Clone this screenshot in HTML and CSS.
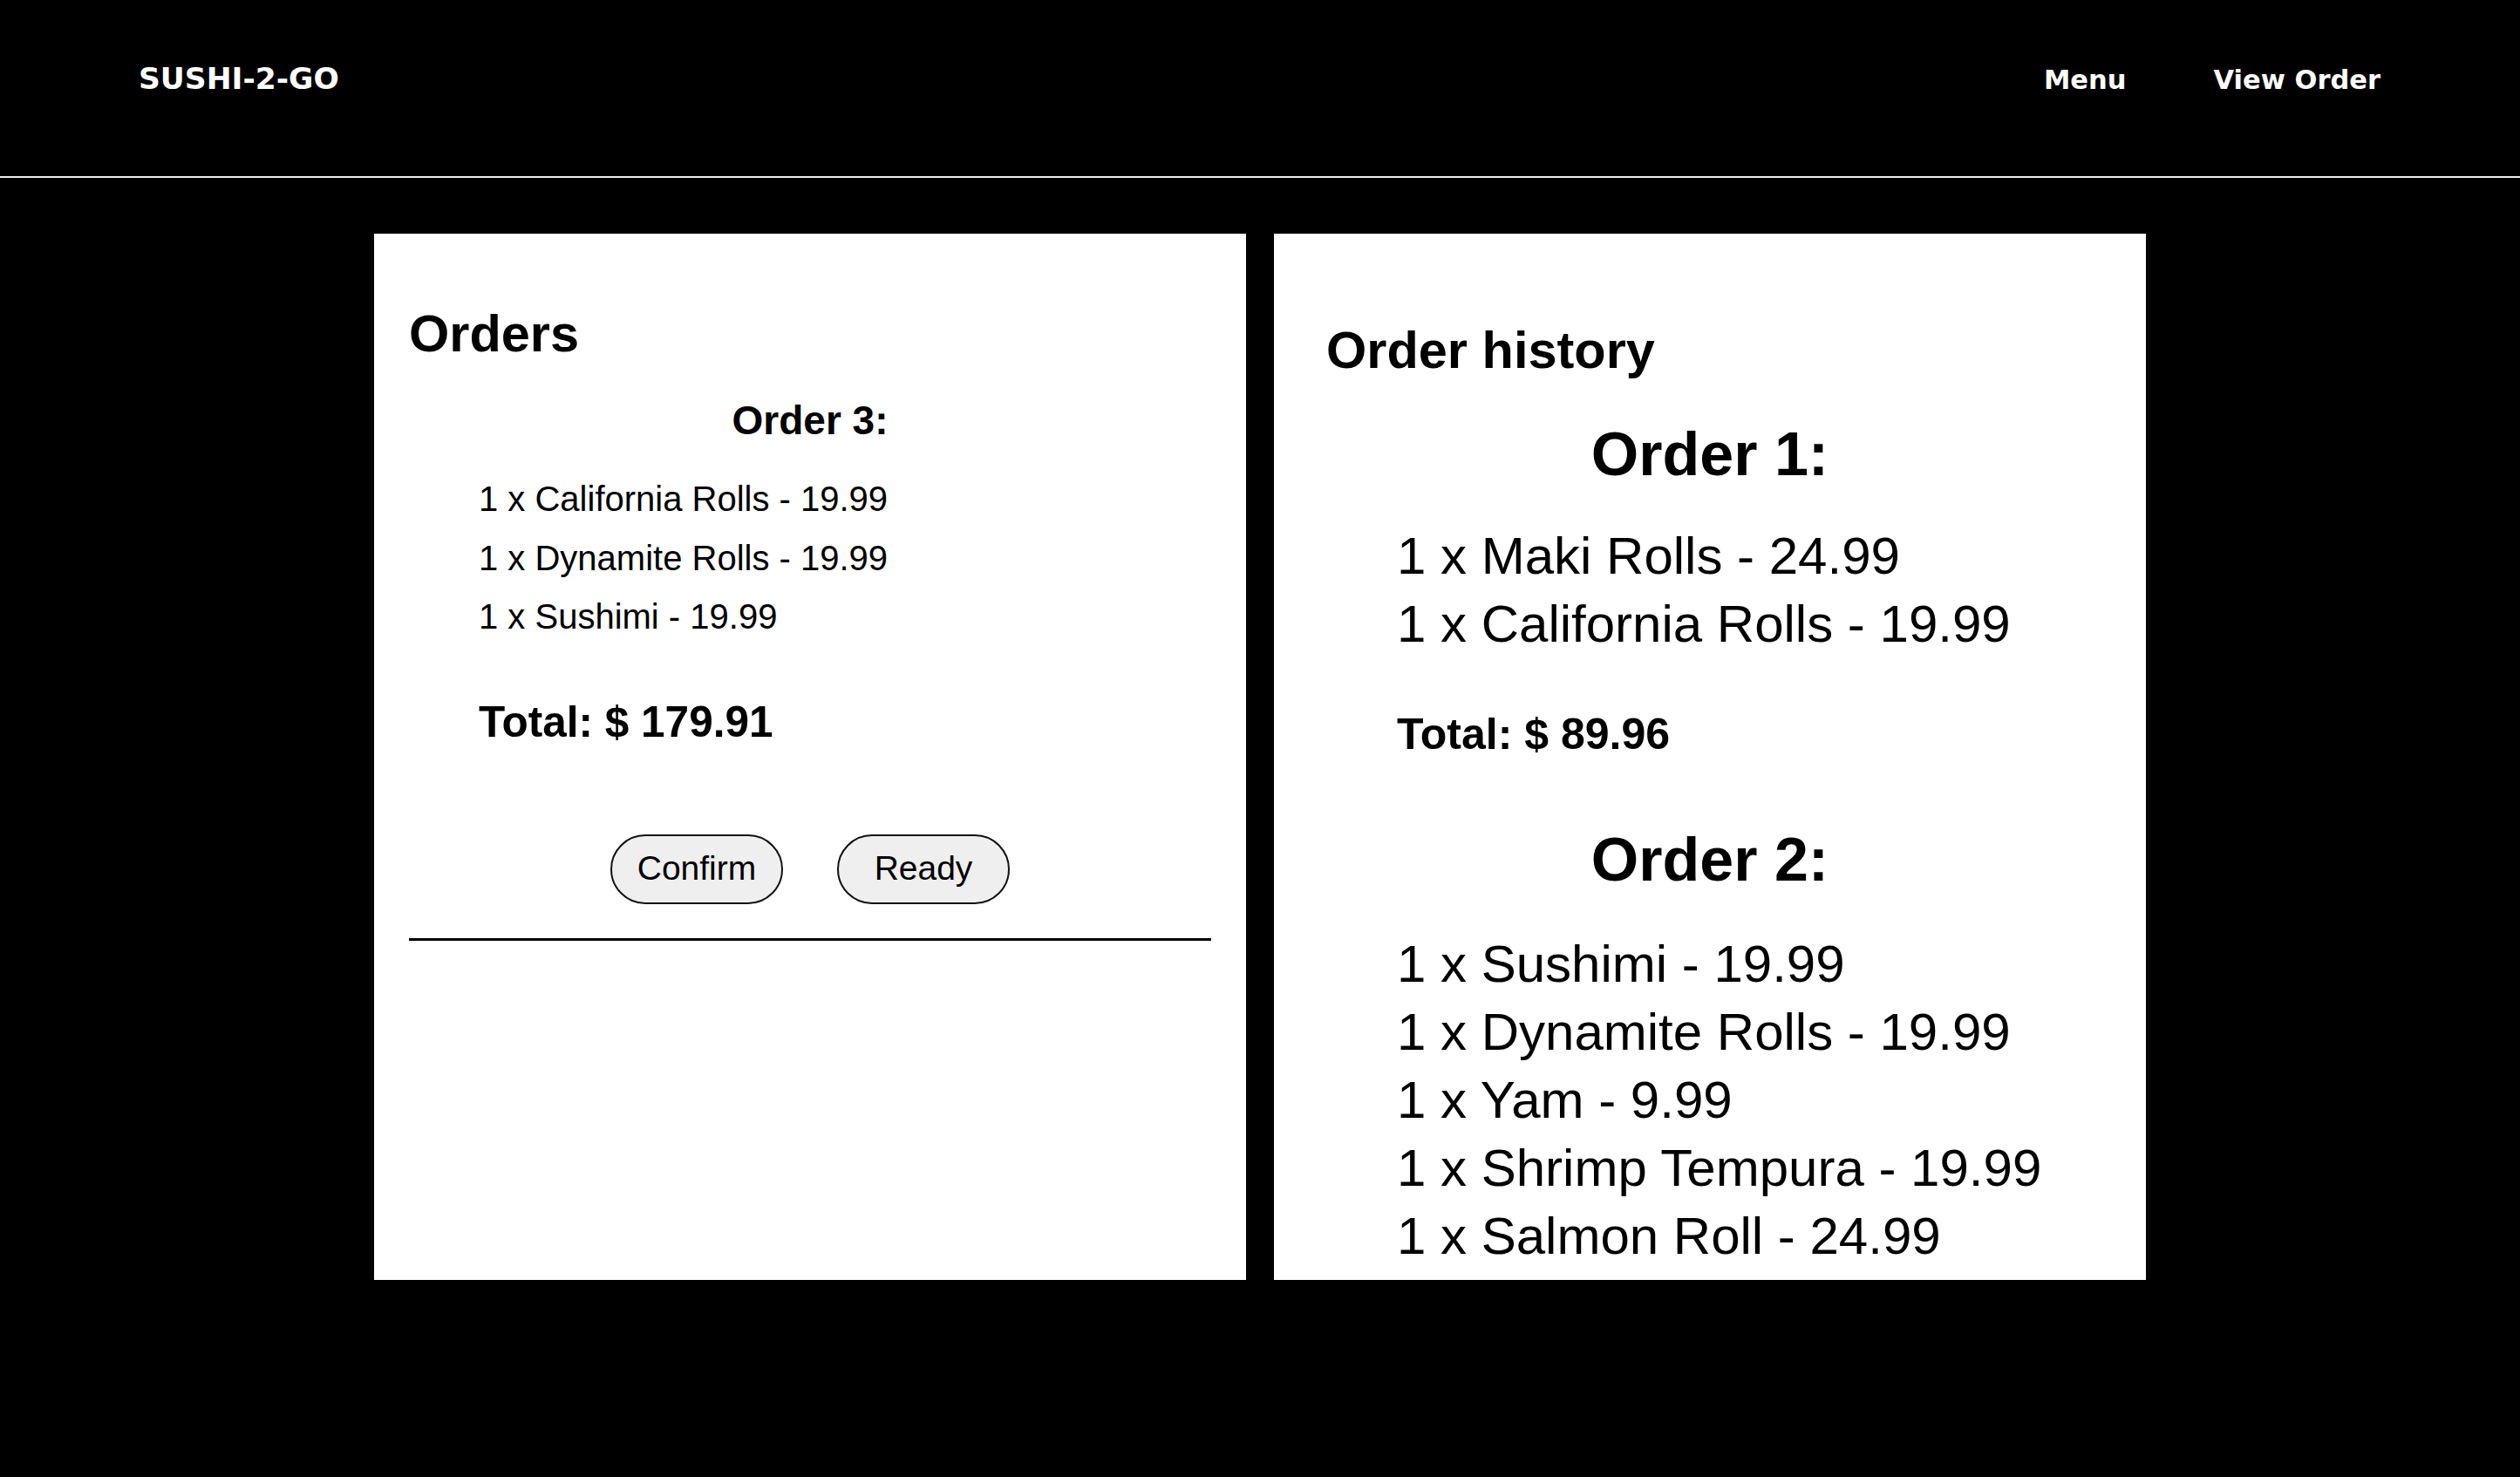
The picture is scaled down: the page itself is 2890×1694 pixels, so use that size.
FILE: index.html
```html
<!DOCTYPE html>
<html lang="en">
<head>
<meta charset="utf-8">
<title>Sushi-2-Go — Orders</title>
<link rel="stylesheet" href="styles.css">
</head>
<body>
<header class="site-header">
  <div class="logo">SUSHI-2-GO</div>
  <nav class="nav">
    <a class="nav-link" href="#">Menu</a>
    <a class="nav-link" href="#">View Order</a>
  </nav>
</header>
<main class="board">
  <section class="card card-orders">
    <h1 class="card-title">Orders</h1>
    <div class="order order-current">
      <h2 class="order-title">Order 3:</h2>
      <ul class="items">
        <li class="item">1 x California Rolls - 19.99</li>
        <li class="item">1 x Dynamite Rolls - 19.99</li>
        <li class="item">1 x Sushimi - 19.99</li>
      </ul>
      <p class="total">Total: $ 179.91</p>
      <div class="actions">
        <button class="btn" type="button">Confirm</button>
        <button class="btn" type="button">Ready</button>
      </div>
      <hr class="divider">
    </div>
  </section>
  <section class="card card-history">
    <h1 class="card-title">Order history</h1>
    <div class="order order-past">
      <h2 class="order-title">Order 1:</h2>
      <ul class="items">
        <li class="item">1 x Maki Rolls - 24.99</li>
        <li class="item">1 x California Rolls - 19.99</li>
      </ul>
      <p class="total">Total: $ 89.96</p>
    </div>
    <div class="order order-past order-late">
      <h2 class="order-title">Order 2:</h2>
      <ul class="items">
        <li class="item">1 x Sushimi - 19.99</li>
        <li class="item">1 x Dynamite Rolls - 19.99</li>
        <li class="item">1 x Yam - 9.99</li>
        <li class="item">1 x Shrimp Tempura - 19.99</li>
        <li class="item">1 x Salmon Roll - 24.99</li>
      </ul>
    </div>
  </section>
</main>
</body>
</html>
```

FILE: styles.css
```css
html, body {
  margin: 0;
  padding: 0;
  background: #000;
}

body {
  font-family: "Liberation Sans", Arial, Helvetica, sans-serif;
  color: #000;
  min-height: 1694px;
}

/* ---------- header ---------- */
.site-header {
  display: flex;
  justify-content: space-between;
  align-items: baseline;
  height: 132px;
  padding: 70px 160px 0 159px;
  border-bottom: 2px solid #eeeeee;
}

.logo {
  font-family: "DejaVu Sans", Verdana, sans-serif;
  font-weight: 700;
  font-size: 34.5px;
  line-height: 40px;
  color: #fff;
}

.nav {
  display: flex;
  gap: 100px;
}

.nav-link {
  font-family: "DejaVu Sans", Verdana, sans-serif;
  font-weight: 700;
  font-size: 30.5px;
  line-height: 40px;
  color: #fff;
  text-decoration: none;
}

/* ---------- board ---------- */
.board {
  display: flex;
  justify-content: center;
  gap: 32px;
  padding-top: 64px;
}

.card {
  width: 1000px;
  height: 1200px;
  box-sizing: border-box;
  background: #fff;
  overflow: hidden;
}

.card-orders {
  padding: 82px 40px 0;
}

.card-history {
  padding: 101px 60px 0;
}

.card-title {
  margin: 0;
  font-size: 59.5px;
  line-height: 66px;
  font-weight: 700;
}

.order-title {
  margin: 0;
  text-align: center;
  font-weight: 700;
}

.items {
  list-style: none;
  margin: 0;
}

.item {
  margin: 0;
}

.total {
  margin: 0;
  font-weight: 700;
  line-height: 56px;
}

/* current order (left) */
.order-current .order-title {
  margin-top: 39px;
  font-size: 46px;
  line-height: 54px;
}

.order-current .items {
  margin-top: 30px;
  padding-left: 80px;
}

.order-current .item {
  font-size: 40px;
  line-height: 67.5px;
}

.order-current .total {
  margin-top: 58px;
  padding-left: 80px;
  font-size: 49.5px;
}

.actions {
  display: flex;
  justify-content: center;
  gap: 62px;
  margin-top: 101px;
}

.btn {
  width: 198px;
  height: 80px;
  box-sizing: border-box;
  border: 2px solid #111;
  border-radius: 40px;
  background: #efefef;
  color: #000;
  font-family: "Liberation Sans", Arial, sans-serif;
  font-size: 39px;
  line-height: 40px;
  padding: 0 0 2px;
}

.divider {
  margin: 39px 0 0;
  border: 0;
  border-top: 3px solid #000;
  height: 0;
}

/* history (right) */
.order-past .order-title {
  margin-top: 76px;
  font-size: 70px;
  line-height: 80px;
}

.order-past:first-of-type .order-title {
  margin-top: 46px;
}

.order-past .items {
  margin-top: 38px;
  padding-left: 81px;
}

.order-late .items {
  margin-top: 41px;
}

.order-past .item {
  font-size: 60px;
  line-height: 78px;
}

.order-past .total {
  margin-top: 59px;
  padding-left: 81px;
  font-size: 50px;
}
```
